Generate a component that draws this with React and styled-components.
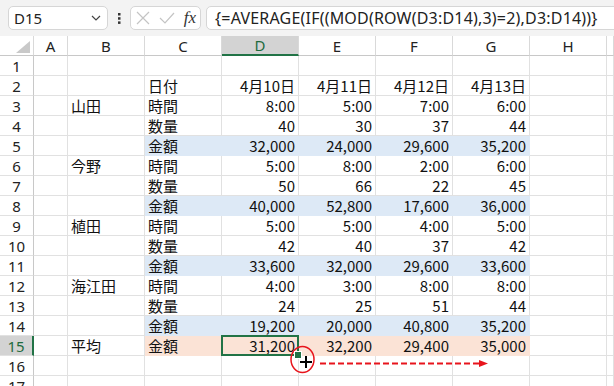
import React from "react";
import styled, { createGlobalStyle, css } from "styled-components";

const GlobalStyle = createGlobalStyle`
  html, body { margin: 0; padding: 0; background: #ffffff; }
  body { width: 614px; height: 386px; overflow: hidden; }
  * { box-sizing: border-box; }
`;

const Page = styled.div`
  position: relative;
  width: 614px;
  height: 386px;
  overflow: hidden;
  background: #fff;
  font-family: "Noto Sans", "Segoe UI", sans-serif;
`;

const FormulaBar = styled.div`
  display: flex;
  align-items: flex-start;
  height: 36px;
  padding: 6px 0 0 8px;
  background: #f3f3f3;
`;

const Box = styled.div`
  height: 24px;
  background: #ffffff;
  border: 1px solid #d6d6d6;
  border-radius: 5px;
  display: flex;
  align-items: center;
`;

const NameBox = styled(Box)`
  width: 100px;
  padding: 0 6px 0 5px;
  justify-content: space-between;
  font-size: 15px;
  color: #222;
`;

const Dots = styled.div`
  width: 22px;
  height: 24px;
  display: flex;
  align-items: center;
  justify-content: center;
`;

const FxBox = styled(Box)`
  width: 71px;
  padding: 0 4px 0 5px;
  justify-content: space-between;
`;

const Fx = styled.span`
  font-family: "Liberation Serif", "DejaVu Serif", serif;
  font-style: italic;
  font-size: 17px;
  color: #333;
  line-height: 1;
  margin-top: -2px;
`;

const FormulaBox = styled(Box)`
  flex: 1;
  margin-left: 5px;
  margin-right: -8px;
  padding-left: 8px;
  font-size: 16px;
  letter-spacing: 0.2px;
  color: #222;
  white-space: nowrap;
  overflow: hidden;
`;

const Sheet = styled.div`
  display: grid;
  grid-template-columns: 34px 34px repeat(7, 77px) 1fr;
  grid-auto-rows: 20px;
`;

const ColHead = styled.div`
  display: flex;
  align-items: center;
  justify-content: center;
  font-size: 15px;
  color: #222;
  background: #ffffff;
  border-right: 1px solid #d9d9d9;
  border-bottom: 1px solid #c8c8c8;
  ${(p) =>
    p.$active &&
    css`
      background: #d3d3d3;
      color: #1f6b3e;
      border-bottom: 2px solid #217346;
    `}
`;

const Corner = styled(ColHead)`
  justify-content: flex-end;
  align-items: flex-end;
  padding: 0 3px 2px 0;
`;

const RowHead = styled.div`
  display: flex;
  align-items: center;
  justify-content: center;
  font-size: 15px;
  color: #222;
  background: #ffffff;
  border-right: 1px solid #c8c8c8;
  border-bottom: 1px solid #e1e1e1;
  ${(p) =>
    p.$active &&
    css`
      background: #d3d3d3;
      color: #1f6b3e;
      border-right: 2px solid #217346;
    `}
`;

const fills = {
  blue: "#dde9f6",
  orange: "#fbe3d6",
};

const Cell = styled.div`
  position: relative;
  display: flex;
  align-items: center;
  justify-content: ${(p) => (p.$right ? "flex-end" : "flex-start")};
  padding: 0 3px 0 3px;
  font-family: "Noto Sans CJK JP", "Noto Sans", sans-serif;
  font-size: 15px;
  color: #111;
  white-space: nowrap;
  background: ${(p) => (p.$fill ? fills[p.$fill] : "#fff")};
  border-right: 1px solid ${(p) => (p.$fill ? fills[p.$fill] : "#e1e1e1")};
  border-bottom: 1px solid ${(p) => (p.$fill ? fills[p.$fill] : "#e1e1e1")};
  ${(p) =>
    p.$selected &&
    css`
      &::after {
        content: "";
        position: absolute;
        left: -1px;
        top: -1px;
        right: -1px;
        bottom: -1px;
        border: 2px solid #217346;
        pointer-events: none;
      }
      &::before {
        content: "";
        position: absolute;
        right: -4px;
        bottom: -4px;
        width: 6px;
        height: 6px;
        background: #217346;
        border: 1px solid #ffffff;
        z-index: 2;
      }
    `}
`;

const Overlay = styled.svg`
  position: absolute;
  left: 0;
  top: 0;
  pointer-events: none;
`;

const cols = ["A", "B", "C", "D", "E", "F", "G", "H", ""];

const data = [
  [],
  ["", "", "日付", "4月10日", "4月11日", "4月12日", "4月13日"],
  ["", "山田", "時間", "8:00", "5:00", "7:00", "6:00"],
  ["", "", "数量", "40", "30", "37", "44"],
  ["", "", "金額", "32,000", "24,000", "29,600", "35,200"],
  ["", "今野", "時間", "5:00", "8:00", "2:00", "6:00"],
  ["", "", "数量", "50", "66", "22", "45"],
  ["", "", "金額", "40,000", "52,800", "17,600", "36,000"],
  ["", "植田", "時間", "5:00", "5:00", "4:00", "5:00"],
  ["", "", "数量", "42", "40", "37", "42"],
  ["", "", "金額", "33,600", "32,000", "29,600", "33,600"],
  ["", "海江田", "時間", "4:00", "3:00", "8:00", "8:00"],
  ["", "", "数量", "24", "25", "51", "44"],
  ["", "", "金額", "19,200", "20,000", "40,800", "35,200"],
  ["", "平均", "金額", "31,200", "32,200", "29,400", "35,000"],
  [],
  [],
];

function rowFill(r) {
  if (r === 15) return "orange";
  if (r === 5 || r === 8 || r === 11 || r === 14) return "blue";
  return null;
}

export default function App() {
  return (
    <Page>
      <GlobalStyle />
      <FormulaBar>
        <NameBox>
          <span>D15</span>
          <svg width="10" height="6" viewBox="0 0 10 6">
            <path d="M1 1 L5 5 L9 1" fill="none" stroke="#444" strokeWidth="1.2" />
          </svg>
        </NameBox>
        <Dots>
          <svg width="3" height="11" viewBox="0 0 3 11">
            <rect x="0" y="0" width="2.5" height="2.5" fill="#333" />
            <rect x="0" y="4.2" width="2.5" height="2.5" fill="#333" />
            <rect x="0" y="8.4" width="2.5" height="2.5" fill="#333" />
          </svg>
        </Dots>
        <FxBox>
          <svg width="14" height="14" viewBox="0 0 14 14">
            <path d="M1 1 L13 13 M13 1 L1 13" stroke="#c4c4c4" strokeWidth="1.2" fill="none" />
          </svg>
          <svg width="16" height="12" viewBox="0 0 16 12">
            <path d="M1 6 L6 11 L15 1" stroke="#c4c4c4" strokeWidth="1.2" fill="none" />
          </svg>
          <Fx>fx</Fx>
        </FxBox>
        <FormulaBox>{"{=AVERAGE(IF((MOD(ROW(D3:D14),3)=2),D3:D14))}"}</FormulaBox>
      </FormulaBar>
      <Sheet>
        <Corner>
          <svg width="14" height="12" viewBox="0 0 14 12">
            <polygon points="0,12 14,12 14,0" fill="#c9c9c9" />
          </svg>
        </Corner>
        {cols.map((c, i) => (
          <ColHead key={i} $active={c === "D"}>
            {c}
          </ColHead>
        ))}
        {data.map((row, ri) => {
          const r = ri + 1;
          const fill = rowFill(r);
          return (
            <React.Fragment key={r}>
              <RowHead $active={r === 15}>{r}</RowHead>
              {cols.map((c, ci) => {
                const v = row[ci] || "";
                const f = fill && ci >= 2 && ci <= 6 ? fill : null;
                return (
                  <Cell
                    key={ci}
                    $right={ci >= 3}
                    $fill={f}
                    $selected={r === 15 && ci === 3}
                  >
                    {v}
                  </Cell>
                );
              })}
            </React.Fragment>
          );
        })}
      </Sheet>
      <Overlay width="614" height="386" viewBox="0 0 614 386">
        <ellipse cx="302.5" cy="359.5" rx="11.5" ry="13" fill="none" stroke="#e8141c" strokeWidth="1.5" />
        <path d="M300 362 H312 M306 356 V368" stroke="#000" strokeWidth="2" />
        <path d="M320 363.5 H480" stroke="#e8141c" strokeWidth="2" strokeDasharray="6 3" />
        <polygon points="479,360 488,363.5 479,367" fill="#e8141c" />
      </Overlay>
    </Page>
  );
}
